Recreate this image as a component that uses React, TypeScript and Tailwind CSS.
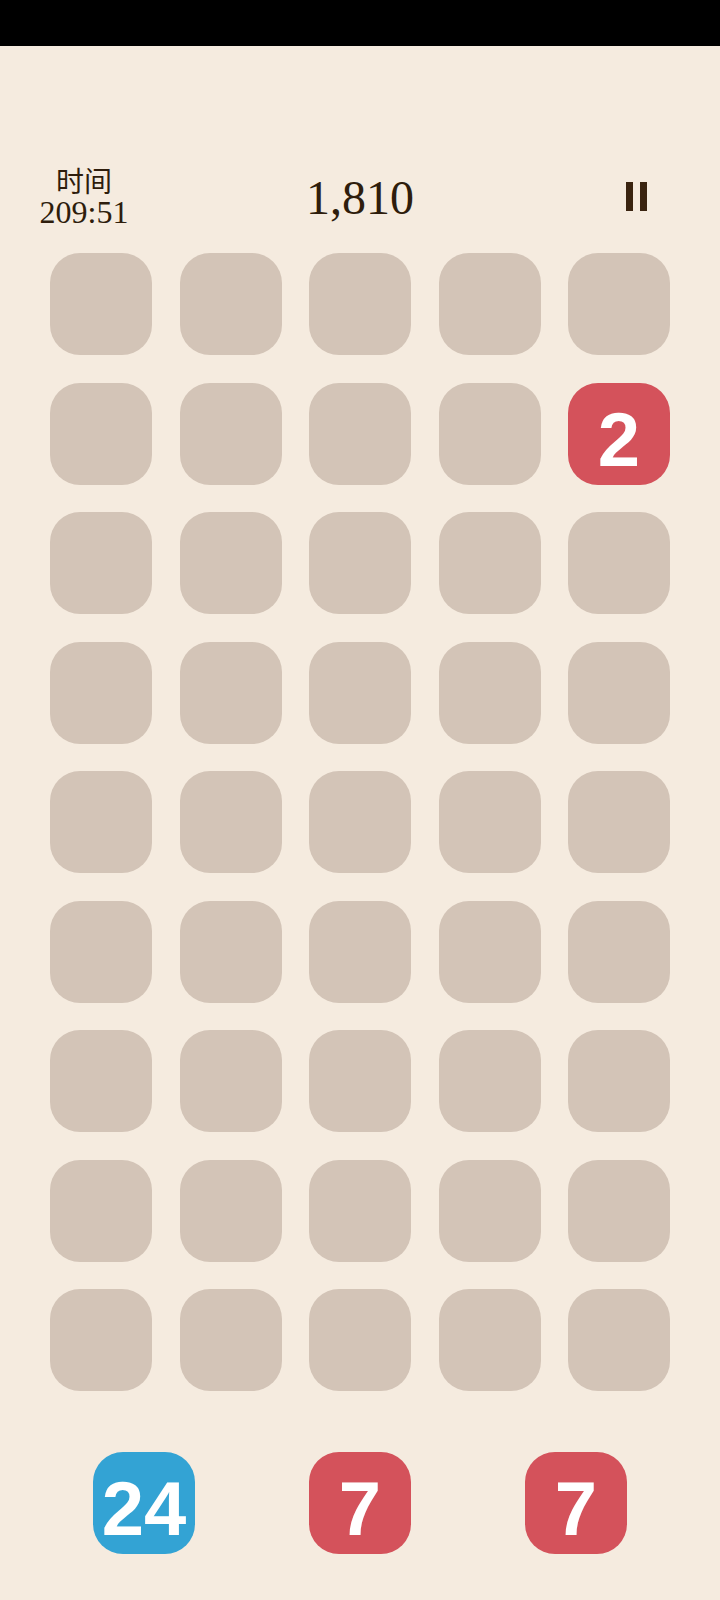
const ROWS = 9;
const COLS = 5;

// filled cells on the board: "row-col" -> value
const filled: Record<string, number> = { "1-4": 2 };

const Tile = ({ value, color }: { value: number; color: string }) => (
  <div
    className={`w-[102px] h-[102px] rounded-[30px] flex items-center justify-center pt-[12px] text-white font-bold text-[76px] leading-none ${color}`}
    style={{ fontFamily: '"Liberation Sans", Arial, sans-serif' }}
  >
    {value}
  </div>
);

const EmptyCell = () => (
  <div className="w-[102px] h-[102px] rounded-[30px] bg-[#d3c4b7]" />
);

export default function App() {
  const cells = [];
  for (let r = 0; r < ROWS; r++) {
    for (let c = 0; c < COLS; c++) {
      const v = filled[`${r}-${c}`];
      cells.push(
        v ? (
          <Tile key={`${r}-${c}`} value={v} color="bg-[#d4525b]" />
        ) : (
          <EmptyCell key={`${r}-${c}`} />
        )
      );
    }
  }

  return (
    <div className="w-[720px] h-[1600px] bg-[#f5ebdf] flex flex-col text-[#2e1d0c]">
      <div className="h-[46px] bg-black shrink-0" />

      {/* header */}
      <div className="flex items-center px-[28px] mt-[117px] h-[66px]">
        <div className="w-[112px] flex flex-col items-center">
          <span
            className="text-[28px] leading-[32px] -mt-[2px]"
            style={{ fontFamily: '"Noto Sans CJK SC", sans-serif' }}
          >
            时间
          </span>
          <span
            className="text-[32px] leading-[32px] -mb-[2px]"
            style={{ fontFamily: '"Liberation Serif", serif' }}
          >
            209:51
          </span>
        </div>
        <div
          className="flex-1 text-center text-[48px] leading-none pt-[4px]"
          style={{ fontFamily: '"Liberation Serif", serif' }}
        >
          1,810
        </div>
        <div className="w-[112px] flex justify-center">
          <div className="flex gap-[7px]">
            <div className="w-[7px] h-[29px] bg-[#3a2410]" />
            <div className="w-[7px] h-[29px] bg-[#3a2410]" />
          </div>
        </div>
      </div>

      {/* board */}
      <div className="grid grid-cols-[repeat(5,102px)] gap-[27.5px] justify-center mt-[24px]">
        {cells}
      </div>

      {/* next pieces */}
      <div className="grid grid-cols-3 px-[36px] mt-[61px] justify-items-center">
        <Tile value={24} color="bg-[#33a3d4]" />
        <Tile value={7} color="bg-[#d4525b]" />
        <Tile value={7} color="bg-[#d4525b]" />
      </div>
    </div>
  );
}
